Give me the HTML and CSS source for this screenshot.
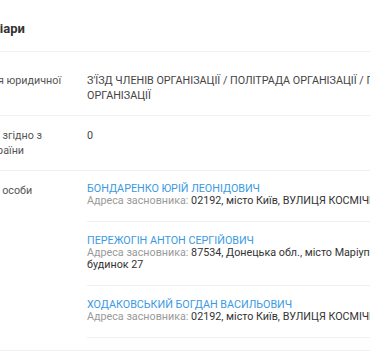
FILE: index.html
```html
<!DOCTYPE html>
<html lang="uk">
<head>
    <meta charset="UTF-8">
    <meta name="viewport" content="width=device-width, initial-scale=1.0">
    <title>Засновники та бенефіціари</title>
    <link rel="stylesheet" href="styles.css">
</head>
<body>
    <div class="card">
        <h2 class="card-title">Засновники та бенефіціари</h2>
        <div class="info-list">
            <div class="info-row">
                <div class="info-label">Структура органу управління юридичної особи</div>
                <div class="info-value">З'ЇЗД ЧЛЕНІВ ОРГАНІЗАЦІЇ / ПОЛІТРАДА ОРГАНІЗАЦІЇ / ГОЛОВА ПРАВЛІННЯ ОРГАНІЗАЦІЇ</div>
            </div>
            <div class="info-row">
                <div class="info-label">Розмір сплаченого капіталу, згідно з нормами законодавства України</div>
                <div class="info-value">0</div>
            </div>
            <div class="info-row">
                <div class="info-label">Засновники (члени), фізичні особи</div>
                <div class="info-value">
                    <div class="founder">
                        <a class="founder-name" href="#">БОНДАРЕНКО ЮРІЙ ЛЕОНІДОВИЧ</a>
                        <div class="founder-address"><span class="muted">Адреса засновника:</span> 02192, місто Київ, ВУЛИЦЯ КОСМІЧНА, будинок 12</div>
                    </div>
                    <div class="founder">
                        <a class="founder-name" href="#">ПЕРЕЖОГІН АНТОН СЕРГІЙОВИЧ</a>
                        <div class="founder-address"><span class="muted">Адреса засновника:</span> 87534, Донецька обл., місто Маріуполь, ПРОСПЕКТ МИРУ, будинок 27</div>
                    </div>
                    <div class="founder">
                        <a class="founder-name" href="#">ХОДАКОВСЬКИЙ БОГДАН ВАСИЛЬОВИЧ</a>
                        <div class="founder-address"><span class="muted">Адреса засновника:</span> 02192, місто Київ, ВУЛИЦЯ КОСМІЧНА, будинок 12</div>
                    </div>
                </div>
            </div>
        </div>
    </div>
</body>
</html>
```

FILE: styles.css
```css
* {
    margin: 0;
    padding: 0;
    box-sizing: border-box;
}

body {
    background: #fff;
    font-family: Roboto, 'Liberation Sans', sans-serif;
    font-size: 10.75px;
    color: #333;
    overflow: hidden;
}

/* the card is wider than the window, only its middle is seen */
.card {
    width: 640px;
    margin-left: -143px;
}

.card-title {
    font-size: 13px;
    font-weight: 700;
    line-height: 20px;
    color: #333;
    padding: 19px 0 12px;
    border-bottom: 1px solid #f0f0f0;
}

.info-list {
    padding-top: 9px;
}

.info-row {
    display: grid;
    grid-template-columns: 220px 400px;
    column-gap: 10px;
    padding: 12px 0;
    line-height: 15px;
    border-bottom: 1px solid #f0f0f0;
}

.info-label {
    color: #555;
}

.info-value {
    color: #444;
}

.founder {
    padding: 13px 0 14px;
    line-height: 12px;
    border-bottom: 1px solid #f0f0f0;
}

.founder:first-child {
    padding-top: 0;
}

.founder-name {
    display: block;
    color: #3b9ae1;
    text-decoration: none;
}

.founder-address {
    color: #333;
}

.muted {
    color: #9a9a9a;
}
```
